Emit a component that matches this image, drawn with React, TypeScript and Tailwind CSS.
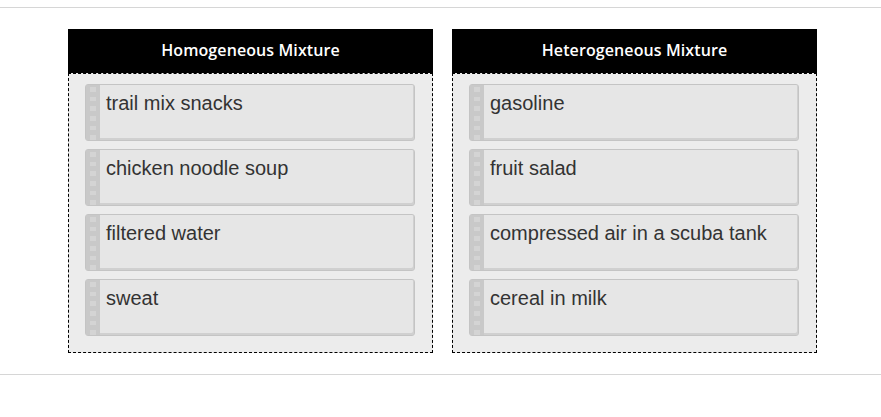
import React from 'react';

const columns = [
  {
    title: 'Homogeneous Mixture',
    items: ['trail mix snacks', 'chicken noodle soup', 'filtered water', 'sweat'],
  },
  {
    title: 'Heterogeneous Mixture',
    items: ['gasoline', 'fruit salad', 'compressed air in a scuba tank', 'cereal in milk'],
  },
];

function Grip() {
  return (
    <div className="flex w-[14px] shrink-0 flex-col items-center gap-[5px] bg-[#c9c9c9] pt-[2px]">
      {[0, 1, 2, 3, 4, 5].map((i) => (
        <span key={i} className="block h-[5px] w-[6px] bg-[#d4d4d4]" />
      ))}
    </div>
  );
}

function Card({ label }: { label: string }) {
  return (
    <div className="flex h-[57px] rounded-[3px] border border-[#c4c4c4] bg-[#e6e6e6] shadow-[inset_-1px_-2px_0_#d0d0d0]">
      <Grip />
      <div className="pl-[6px] pt-[5px] font-['Liberation_Sans',Arial,sans-serif] text-[20px] leading-[26px] text-[#333]">
        {label}
      </div>
    </div>
  );
}

export default function App() {
  return (
    <div className="h-[417px] w-[881px] bg-white">
      <div className="pt-[7px]">
        <div className="h-px bg-[#d6d6d6]" />
      </div>
      <div className="flex gap-[19px] pl-[68px] pt-[21px]">
        {columns.map((col) => (
          <div key={col.title} className="w-[365px]">
            <div className="flex h-[44px] items-center justify-center bg-black pb-[2px] font-['Open_Sans',sans-serif] text-[16px] font-semibold tracking-[0.1px] text-white">
              {col.title}
            </div>
            <div className="flex h-[280px] flex-col gap-[8px] border border-dashed border-black bg-[#ececec] pl-[16px] pr-[17px] pt-[10px]">
              {col.items.map((it) => (
                <Card key={it} label={it} />
              ))}
            </div>
          </div>
        ))}
      </div>
      <div className="pt-[21px]">
        <div className="h-px bg-[#d6d6d6]" />
      </div>
    </div>
  );
}
